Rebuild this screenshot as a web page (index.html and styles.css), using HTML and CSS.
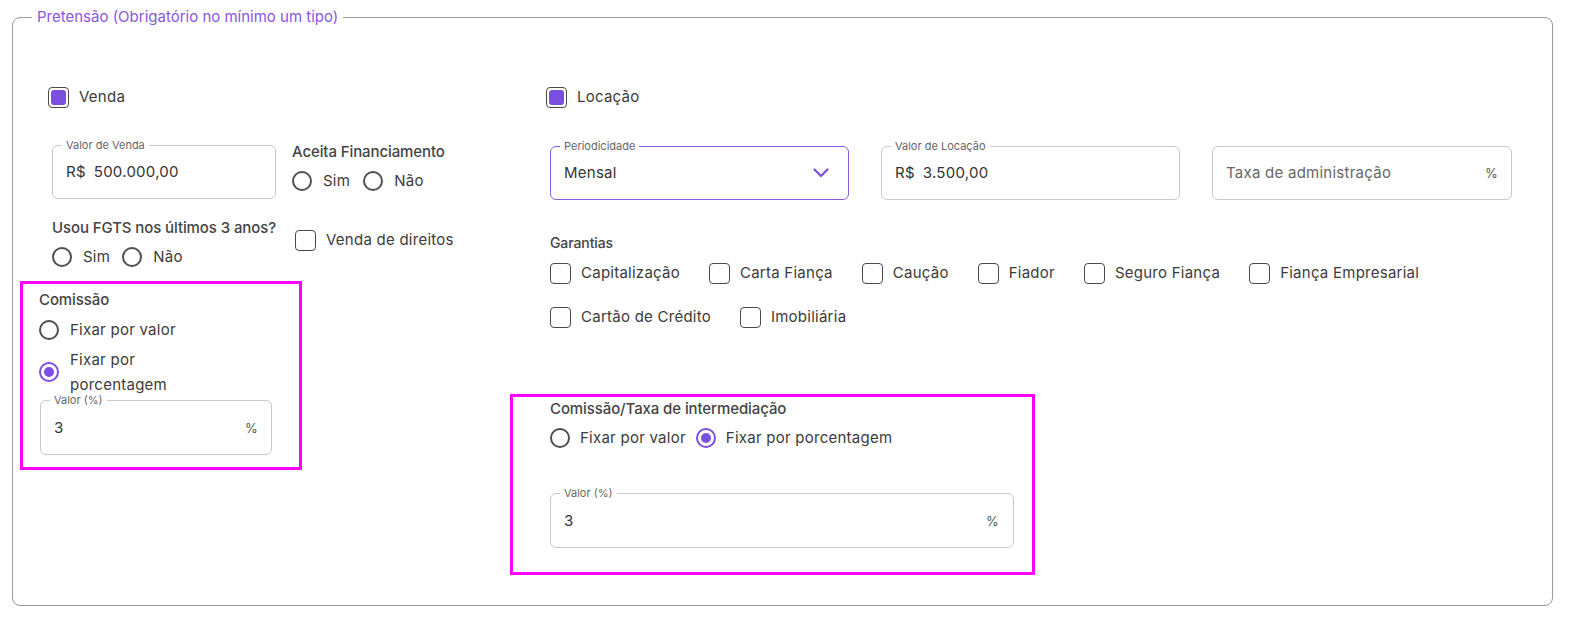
FILE: index.html
```html
<!DOCTYPE html>
<html lang="pt-BR">
<head>
<meta charset="utf-8">
<title>Pretensão</title>
<link rel="stylesheet" href="styles.css">
</head>
<body>
<fieldset class="pretensao">
  <legend>Pretensão (Obrigatório no mínimo um tipo)</legend>
  <div class="cols">
    <div class="col-left">
      <label class="check main-check"><span class="cb checked"></span>Venda</label>
      <div class="venda-grid">
        <div class="field w-venda">
          <span class="flabel">Valor de Venda</span>
          <span class="val"><span class="cur">R$</span>500.000,00</span>
        </div>
        <div class="group fin">
          <div class="glabel">Aceita Financiamento</div>
          <div class="radios">
            <label class="radio"><span class="rb"></span>Sim</label>
            <label class="radio"><span class="rb"></span>Não</label>
          </div>
        </div>
        <div class="group fgts">
          <div class="glabel">Usou FGTS nos últimos 3 anos?</div>
          <div class="radios">
            <label class="radio"><span class="rb"></span>Sim</label>
            <label class="radio"><span class="rb"></span>Não</label>
          </div>
        </div>
        <label class="check direitos"><span class="cb"></span>Venda de direitos</label>
      </div>
      <div class="highlight hl-left">
        <div class="glabel">Comissão</div>
        <label class="radio r-valor"><span class="rb"></span>Fixar por valor</label>
        <label class="radio r-wrap"><span class="rb on"></span><span class="rtext">Fixar por porcentagem</span></label>
        <div class="field w-com">
          <span class="flabel">Valor (%)</span>
          <span class="val">3</span>
          <span class="suffix">%</span>
        </div>
      </div>
    </div>
    <div class="col-right">
      <label class="check main-check loc"><span class="cb checked"></span>Locação</label>
      <div class="loc-fields">
        <div class="field select">
          <span class="flabel">Periodicidade</span>
          <span class="val">Mensal</span>
          <svg class="chev" width="16" height="10" viewBox="0 0 16 10"><polyline points="1.5,1.5 8,8 14.5,1.5" fill="none" stroke="#7a4fdc" stroke-width="2.2" stroke-linecap="round" stroke-linejoin="round"/></svg>
        </div>
        <div class="field">
          <span class="flabel">Valor de Locação</span>
          <span class="val"><span class="cur">R$</span>3.500,00</span>
        </div>
        <div class="field">
          <span class="val ph">Taxa de administração</span>
          <span class="suffix">%</span>
        </div>
      </div>
      <div class="garantias">
        <div class="glabel small">Garantias</div>
        <div class="check-list">
          <label class="check"><span class="cb"></span>Capitalização</label>
          <label class="check"><span class="cb"></span>Carta Fiança</label>
          <label class="check"><span class="cb"></span>Caução</label>
          <label class="check"><span class="cb"></span>Fiador</label>
          <label class="check"><span class="cb"></span>Seguro Fiança</label>
          <label class="check"><span class="cb"></span>Fiança Empresarial</label>
          <label class="check"><span class="cb"></span>Cartão de Crédito</label>
          <label class="check"><span class="cb"></span>Imobiliária</label>
        </div>
      </div>
      <div class="highlight hl-right">
        <div class="glabel">Comissão/Taxa de intermediação</div>
        <div class="radios">
          <label class="radio"><span class="rb"></span>Fixar por valor</label>
          <label class="radio"><span class="rb on"></span>Fixar por porcentagem</label>
        </div>
        <div class="field w-com2">
          <span class="flabel">Valor (%)</span>
          <span class="val">3</span>
          <span class="suffix">%</span>
        </div>
      </div>
    </div>
  </div>
</fieldset>
</body>
</html>
```

FILE: styles.css
```css
* { box-sizing: border-box; }

html, body {
  margin: 0;
  padding: 0;
  background: #ffffff;
  overflow: hidden;
}

body {
  width: 1587px;
  height: 626px;
  font-family: Inter, "Noto Sans", sans-serif;
  font-size: 15px;
  letter-spacing: 0.25px;
  color: #3b3b3b;
}

.pretensao {
  margin: 7px 0 0 12px;
  width: 1541px;
  height: 599px;
  padding: 60px 0 0 7px;
  border: 1px solid #9a9a9a;
  border-radius: 8px;
  min-width: 0;
}

.pretensao > legend {
  margin-left: 12px;
  padding: 0 5px;
  font-size: 15px;
  line-height: 20px;
  letter-spacing: 0;
  color: #8a56e2;
}

.cols {
  display: grid;
  grid-template-columns: 490px 1fr;
}

/* checkboxes */
.check {
  display: flex;
  align-items: center;
  gap: 10px;
  height: 20px;
  line-height: 20px;
  white-space: nowrap;
}

.cb {
  flex: none;
  width: 21px;
  height: 21px;
  border: 1.5px solid #4a4a4a;
  border-radius: 4px;
  background: #fff;
}

.cb.checked {
  padding: 2px;
}

.cb.checked::after {
  content: "";
  display: block;
  width: 100%;
  height: 100%;
  border-radius: 3px;
  background: #7b4fdf;
}

.main-check {
  margin-left: 28px;
}

.main-check.loc {
  margin-left: 36px;
}

/* radios */
.radios {
  display: flex;
  gap: 13px;
  align-items: center;
}

.radio {
  display: flex;
  align-items: center;
  gap: 11px;
  line-height: 20px;
  white-space: nowrap;
}

.rb {
  flex: none;
  width: 20px;
  height: 20px;
  border: 2px solid #4f4f4f;
  border-radius: 50%;
  background: #fff;
  display: flex;
  align-items: center;
  justify-content: center;
}

.rb.on {
  border-color: #7b4fdf;
}

.rb.on::after {
  content: "";
  width: 10px;
  height: 10px;
  border-radius: 50%;
  background: #7b4fdf;
}

.glabel {
  font-weight: 500;
  color: #444;
  line-height: 20px;
  font-size: 15px;
  letter-spacing: -0.1px;
  white-space: nowrap;
}

.glabel.small {
  font-size: 14px;
}

/* text fields */
.field {
  position: relative;
  height: 54px;
  border: 1px solid #c9c9c9;
  border-radius: 6px;
  display: flex;
  align-items: center;
  justify-content: space-between;
  padding: 0 13px;
}

.flabel {
  position: absolute;
  top: -8px;
  left: 9px;
  padding: 0 4px;
  background: #fff;
  font-size: 11px;
  line-height: 14px;
  letter-spacing: 0;
  color: #666;
}

.val {
  line-height: 20px;
  color: #333;
}

.val.ph {
  color: #666;
}

.cur {
  margin-right: 8px;
}

.suffix {
  font-size: 13px;
  color: #555;
}

/* left column */
.venda-grid {
  display: grid;
  grid-template-columns: 224px auto;
  column-gap: 16px;
  row-gap: 19px;
  margin: 38px 0 0 32px;
  align-items: start;
}

.fin {
  margin-top: -3px;
}

.fin .radios {
  margin-top: 9px;
}

.fgts .radios {
  margin-top: 9px;
  gap: 12px;
}

.direitos {
  margin: 12px 0 0 3px;
}

.highlight {
  border: 3px solid #ff00ff;
}

.hl-left {
  width: 282px;
  height: 189px;
  margin: 14px 0 0 0;
  padding: 6px 0 0 16px;
}

.r-valor {
  margin-top: 10px;
}

.r-wrap {
  margin-top: 7px;
}

.r-wrap .rtext {
  white-space: normal;
  width: 110px;
  line-height: 25px;
}

.w-com {
  width: 232px;
  height: 55px;
  margin: 3px 0 0 1px;
  padding-right: 13px;
}

/* right column */
.loc-fields {
  display: grid;
  grid-template-columns: 299px 299px 300px;
  column-gap: 32px;
  margin: 39px 0 0 40px;
}

.select {
  border-color: #8a5be0;
}

.chev {
  margin-right: 6px;
}

.garantias {
  margin: 33px 0 0 40px;
}

.glabel.small + .check-list {
  margin-top: 10px;
}

.check-list {
  display: flex;
  flex-wrap: wrap;
  column-gap: 29px;
  row-gap: 24px;
  width: 880px;
}

.hl-right {
  width: 525px;
  height: 181px;
  margin-top: 67px;
  padding: 2px 0 0 37px;
}

.hl-right .radios {
  margin-top: 9px;
  gap: 10px;
}

.hl-right .radio {
  gap: 10px;
}

.w-com2 {
  width: 464px;
  height: 55px;
  margin-top: 45px;
  padding-right: 14px;
}
```
